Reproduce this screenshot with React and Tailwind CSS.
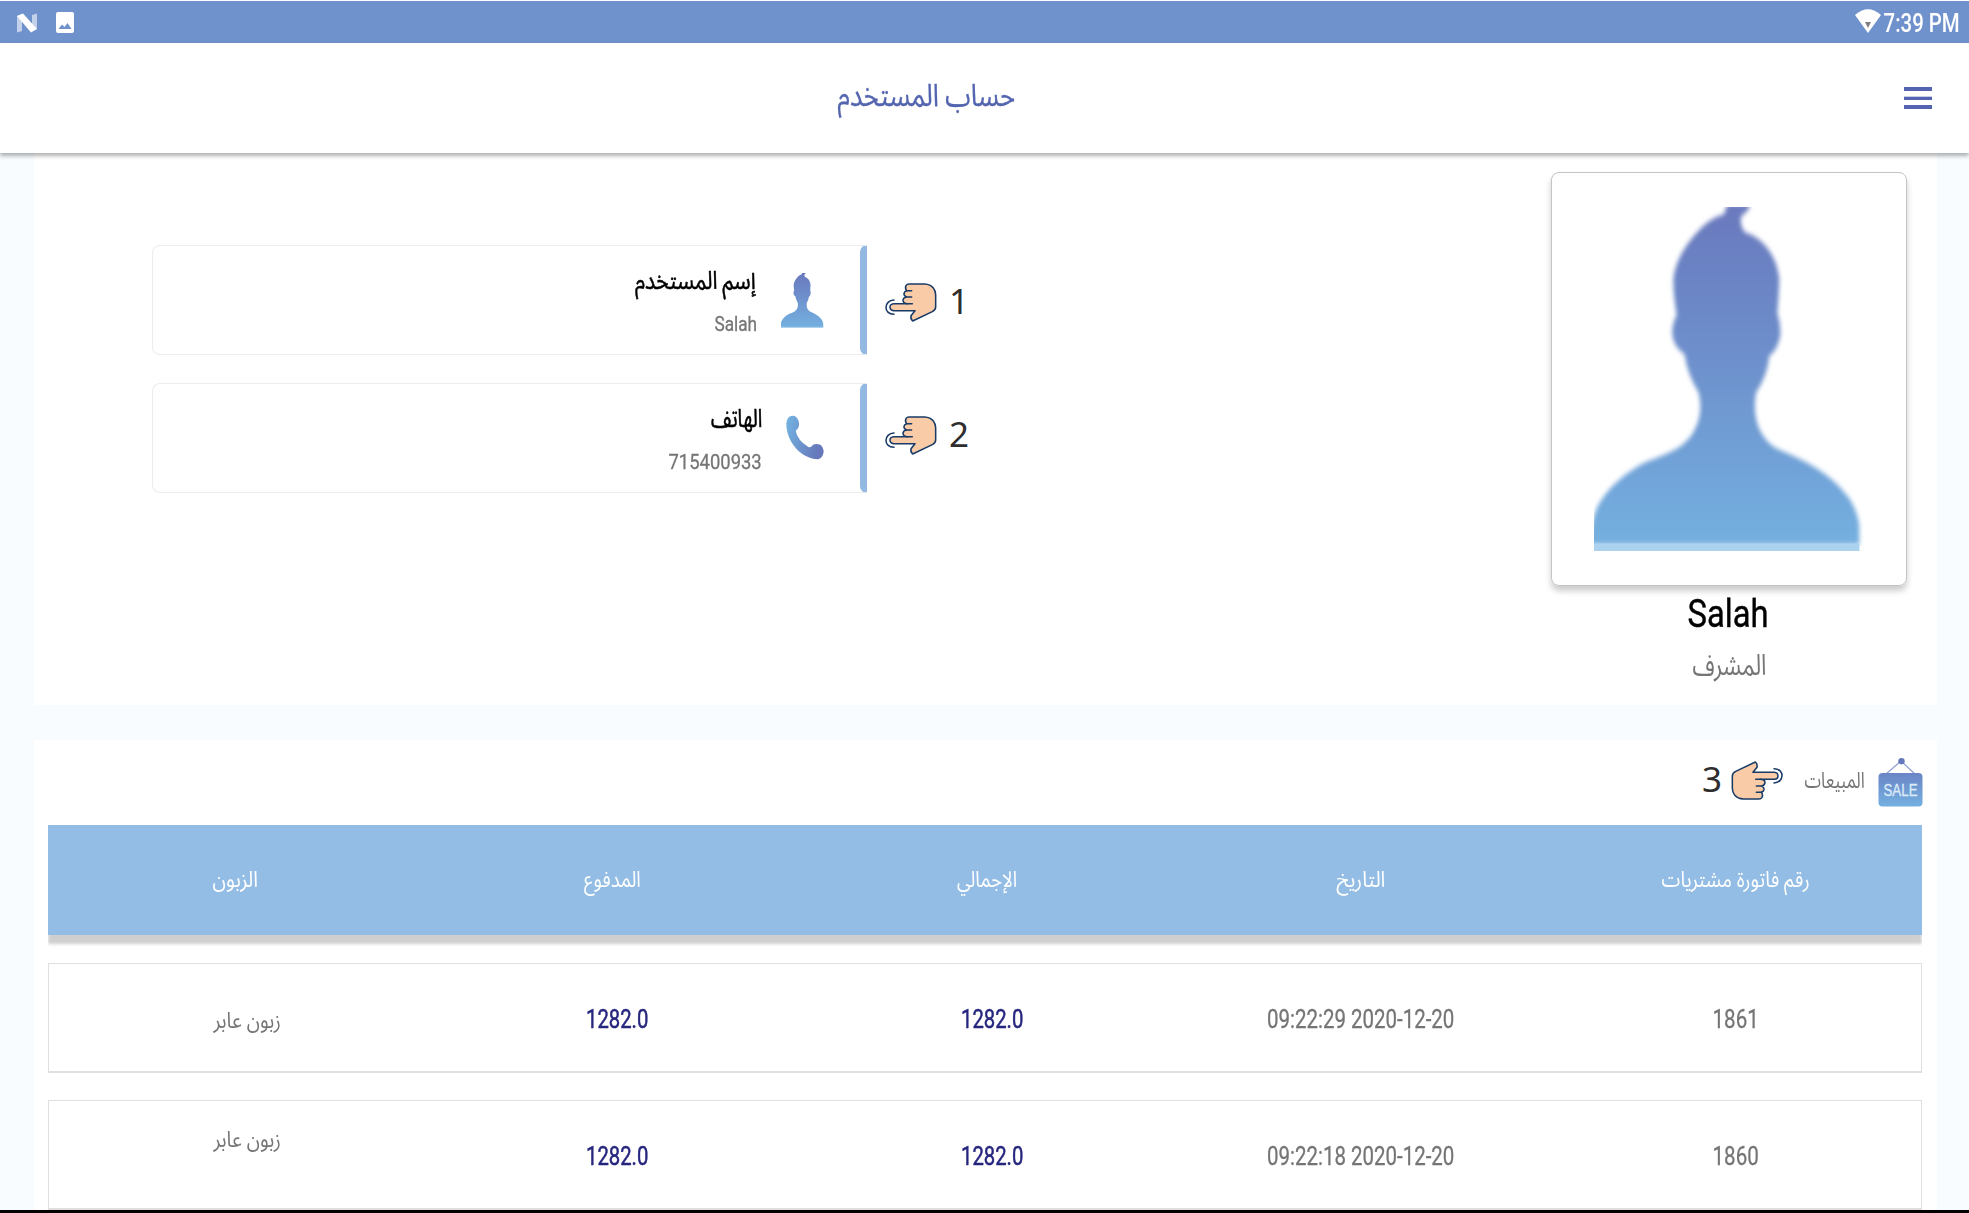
import { useLayoutEffect, useRef, useState } from "react";

// Text squeezed or stretched horizontally so that it fills `w` pixels.
function Fit({ w, className = "", children, dir = "rtl" }) {
  const ref = useRef(null);
  const [k, setK] = useState(1);
  useLayoutEffect(() => {
    setK(w / ref.current.offsetWidth);
  }, [w, children]);
  return (
    <span className={"flex shrink-0 justify-center whitespace-nowrap " + className} style={{ width: w }}>
      <span ref={ref} dir={dir} className="shrink-0" style={{ transform: `scaleX(${k})` }}>
        {children}
      </span>
    </span>
  );
}

function Person({ id, className, soft = 0 }) {
  return (
    <svg className={className} viewBox="222 153 810 931" preserveAspectRatio="none">
      <defs>
        <linearGradient id={id} x1="0" y1="0" x2="0" y2="1">
          <stop offset="0" stopColor="#6a79bd" />
          <stop offset="0.4" stopColor="#6d8dca" />
          <stop offset="1" stopColor="#74b0e0" />
        </linearGradient>
        <filter id={id + "-soft"} x="-5%" y="-5%" width="110%" height="110%">
          <feGaussianBlur stdDeviation={soft} />
        </filter>
      </defs>
      <path
        fill={`url(#${id})`}
        filter={soft ? `url(#${id}-soft)` : undefined}
        d="M622 145L692 145Q684 168 664 177Q658 204 676 222C738 238 774 298 778 350Q776 400 772 440Q783 470 781 500Q773 540 748 556Q742 610 708 656C696 720 716 778 768 806C850 838 930 870 988 942Q1017 985 1018 1020L1018 1067L200 1067L222 990C240 930 310 875 372 846C420 826 500 812 528 748C546 712 542 682 536 656Q500 600 494 552Q462 532 457 500Q455 470 470 446Q460 390 460 350C466 290 510 240 548 206Q580 178 612 173Z"
      />
      <rect x="222" y="1064" width="796" height="20" fill="#abd2ef" />
    </svg>
  );
}

function Hand({ className = "" }) {
  return (
    <svg className={"shrink-0 " + className} width="52" height="39" viewBox="974 160 156 117" fill="none" stroke="#183a66" strokeWidth="4.6" strokeLinecap="round" strokeLinejoin="round">
      <path
        fill="#f9cba7"
        d="M1046 163H1093Q1110 164 1119 175Q1126 184 1126 195V232Q1126 241 1116 246L1057 274Q1050 268 1052 258L1064 243H1000Q989 242 989 232Q989 223 1000 222H1042Q1028 222 1028 212Q1029 203 1038 202Q1030 198 1031 191Q1032 185 1039 183Q1033 176 1037 168Q1040 163 1046 163Z"
      />
      <path d="M1039 183H1054M1038 202H1054M1040 222H1056M1001 211C970 212 968 254 1001 254" />
    </svg>
  );
}

function Phone() {
  return (
    <svg width="38" height="45" viewBox="677 553 114 135" preserveAspectRatio="none">
      <defs>
        <linearGradient id="phone" x1="0" y1="0" x2="1" y2="0.3">
          <stop offset="0.1" stopColor="#72aede" />
          <stop offset="1" stopColor="#6678bb" />
        </linearGradient>
      </defs>
      <path
        fill="url(#phone)"
        d="M697 555Q710 555 715 572Q720 590 706 600Q711 628 744 649Q752 652 757 643Q766 637 780 642Q790 650 790 664Q787 682 774 686Q750 686 727 671C697 651 677 613 678 578Q680 556 697 555Z"
      />
    </svg>
  );
}

function SaleSign() {
  return (
    <svg width="45" height="50" viewBox="0 0 45 50">
      <defs>
        <linearGradient id="sale" x1="0" y1="0" x2="0" y2="1">
          <stop offset="0" stopColor="#6b85c6" />
          <stop offset="1" stopColor="#74b0e0" />
        </linearGradient>
      </defs>
      <path d="M8 17L23 4L37 17" fill="none" stroke="#8d9dd3" strokeWidth="1.2" />
      <circle cx="23.5" cy="4.2" r="3.2" fill="#6478bd" />
      <rect x="0.5" y="16" width="44" height="33.5" rx="4" fill="url(#sale)" />
      <text x="22.500" y="38.800" textAnchor="middle" textLength="34" lengthAdjust="spacingAndGlyphs" fontSize="16" fill="#dcebf8" stroke="#dcebf8" strokeWidth="0.3" fontFamily="Liberation Sans, sans-serif">
        SALE
      </text>
    </svg>
  );
}

function StatusBar() {
  return (
    <div className="flex h-[43px] items-start border-t border-white bg-[#6f92cc]">
      <svg className="mt-3 ml-[17px]" width="20" height="20" viewBox="0 0 20 20">
        <path d="M0 3L5 1V18L0 19.5ZM15 2L20 .5V16L15 18Z" fill="#c3d1ea" />
        <path d="M0 3L6 .5L20 16L14 19.5Z" fill="#fff" />
      </svg>
      <svg className="mt-[11px] ml-[19px]" width="18" height="21" viewBox="0 0 18 21">
        <rect width="18" height="21" rx="2" fill="#fff" />
        <path d="M2.5 17L6 12.5L8.5 15L11.500 11L15.500 17Z" fill="#6f92cc" />
      </svg>
      <svg className="mt-2 ml-auto" width="26" height="24" viewBox="0 0 26 24">
        <path d="M0 6Q13 -5.500 26 6L13 24Z" fill="#fff" />
        <path d="M10 13H16L13 19Z" fill="#808080" />
      </svg>
      <Fit w={76} dir="ltr" className="mt-0.5 mr-[9px] ml-[3px] text-[25px] leading-[41px] font-medium text-white">
        7:39 PM
      </Fit>
    </div>
  );
}

function AppBar() {
  return (
    <header className="relative z-10 flex h-[110px] items-start bg-white shadow-[0_3px_4px_rgba(0,0,0,0.3)]">
      <Fit w={178} className="mt-[29px] ml-[837px] text-[31px] leading-[48px] text-[#5465b0] [-webkit-text-stroke:0.3px]">
        حساب المستخدم
      </Fit>
      <div className="mt-11 mr-[37px] ml-auto flex w-7 flex-col gap-[5px]">
        <span className="h-1 bg-[#5564b0]" />
        <span className="h-1 border-t border-[#c9cde6] bg-[#5564b0]" />
        <span className="h-1 bg-[#5564b0]" />
      </div>
    </header>
  );
}

function InfoCard({ children, icon, n }) {
  return (
    <div className="flex h-[110px] items-start">
      <div className="flex h-[110px] w-[715px] items-start justify-end overflow-hidden rounded-l-lg border-y border-l border-[#ececef]">
        <div className="flex flex-col items-end">{children}</div>
        {icon}
        <div className="-mt-px h-[110px] w-[7px] shrink-0 rounded-l-lg bg-[#93b9e2]" />
      </div>
      {n}
    </div>
  );
}

const columns = [
  ["الزبون", 45, "ml-0"],
  ["المدفوع", 57, "ml-1"],
  ["الإجمالي", 60, "ml-[5px]"],
  ["التاريخ", 49, "ml-0.5"],
  ["رقم فاتورة مشتريات", 148, "ml-0.5"],
];

const rows = [
  { id: "1861", date: "09:22:29 2020-12-20", customer: "mt-[37px]" },
  { id: "1860", date: "09:22:18 2020-12-20", customer: "mt-[19px]" },
];

export default function App() {
  return (
    <div className="flex h-[1213px] w-[1969px] flex-col overflow-hidden bg-[#f8fcff] font-[Roboto,'Noto_Sans_Arabic','DejaVu_Sans',sans-serif]">
      <StatusBar />
      <AppBar />

      <section className="ml-[34px] flex h-[552px] w-[1903px] shrink-0 items-start justify-between bg-white pr-[30px] pl-[118px]">
        <div className="mt-[92px] flex flex-col gap-7">
          <InfoCard
            icon={<Person id="small" className="mt-[27px] mr-9 ml-6 h-[55px] w-[43px]" />}
            n={
              <>
                <Hand className="mt-[38px] ml-[18px]" />
                <span className="mt-8 ml-3 font-['Noto_Sans'] text-[35px] leading-[48px] text-[#2e2e2e]">1</span>
              </>
            }
          >
            <Fit w={121} className="mt-[15px] mr-px text-[25px] leading-[40px] text-black [-webkit-text-stroke:0.5px]">إسم المستخدم</Fit>
            <Fit w={43} dir="ltr" className="mt-[6px] text-[20px] leading-[34px] text-[#757575] [-webkit-text-stroke:0.3px]">Salah</Fit>
          </InfoCard>
          <InfoCard
            icon={<div className="mt-[31px] mr-9 ml-6"><Phone /></div>}
            n={
              <>
                <Hand className="mt-[33px] ml-[18px]" />
                <span className="mt-[27px] ml-3 font-['Noto_Sans'] text-[35px] leading-[48px] text-[#2e2e2e]">2</span>
              </>
            }
          >
            <Fit w={51} className="mt-[15px] text-[25px] leading-[40px] text-black [-webkit-text-stroke:0.6px]">الهاتف</Fit>
            <Fit w={93} dir="ltr" className="mt-[6px] text-[21px] leading-[34px] text-[#757575] [-webkit-text-stroke:0.3px]">715400933</Fit>
          </InfoCard>
        </div>

        <div className="mt-[19px] flex w-[356px] flex-col items-center">
          <div className="flex h-[414px] w-[356px] justify-center rounded-lg border border-[#c4c4c4] pt-[34px] shadow-[0_5px_6px_rgba(0,0,0,0.2)]">
            <Person id="large" soft={7} className="h-[344px] w-[270px]" />
          </div>
          <Fit w={81} dir="ltr" className="mt-[3px] mr-0.5 text-[38px] leading-[50px] text-black [-webkit-text-stroke:0.4px]">Salah</Fit>
          <Fit w={74} className="mt-px text-[29px] leading-[50px] text-[#757575]">المشرف</Fit>
        </div>
      </section>

      <section className="mt-[35px] ml-[34px] flex h-[470px] w-[1903px] shrink-0 flex-col bg-white px-[14px]">
        <div className="flex h-[85px] shrink-0 items-start justify-end">
          <span className="mt-[15px] font-['Noto_Sans'] text-[35px] leading-[48px] text-[#2e2e2e]">3</span>
          <Hand className="mt-[21px] ml-[9px] rotate-180" />
          <Fit w={60} className="mt-[21px] ml-[22px] text-[22px] leading-[40px] text-[#757575]">المبيعات</Fit>
          <div className="mt-[17px] ml-[13px]"><SaleSign /></div>
        </div>

        <div className="grid h-[110px] w-[1874px] shrink-0 grid-cols-5 justify-items-center bg-[#93bde5] shadow-[0_9px_3px_0_#cfcfcf] [clip-path:inset(0_0_-14px_0)]">
          {columns.map(([label, w, shift]) => (
            <Fit key={label} w={w} className={"mt-[35px] h-10 text-[22px] leading-[40px] text-white " + shift}>{label}</Fit>
          ))}
        </div>

        {rows.map((r) => (
          <div key={r.id} className="mt-[28px] -mb-px grid h-[110px] w-[1874px] shrink-0 grid-cols-5 justify-items-center border border-b-2 border-[#dfdfdf] text-[25.5px] leading-[40px]">
            <Fit w={67} className={"ml-[22px] h-10 text-[22px] text-[#757575] " + r.customer}>زبون عابر</Fit>
            <Fit w={62} dir="ltr" className="mt-[35px] ml-3.5 h-10 text-[#26267f] [-webkit-text-stroke:0.5px]">1282.0</Fit>
            <Fit w={62} dir="ltr" className="mt-[35px] ml-3.5 h-10 text-[#26267f] [-webkit-text-stroke:0.5px]">1282.0</Fit>
            <Fit w={187} dir="ltr" className="mt-[35px] ml-[3px] h-10 text-[#757575] [-webkit-text-stroke:0.3px]">{r.date}</Fit>
            <Fit w={46} dir="ltr" className="mt-[35px] ml-[3px] h-10 text-[#757575] [-webkit-text-stroke:0.3px]">{r.id}</Fit>
          </div>
        ))}
      </section>
      <div className="h-[3px] shrink-0 bg-black" />
    </div>
  );
}
